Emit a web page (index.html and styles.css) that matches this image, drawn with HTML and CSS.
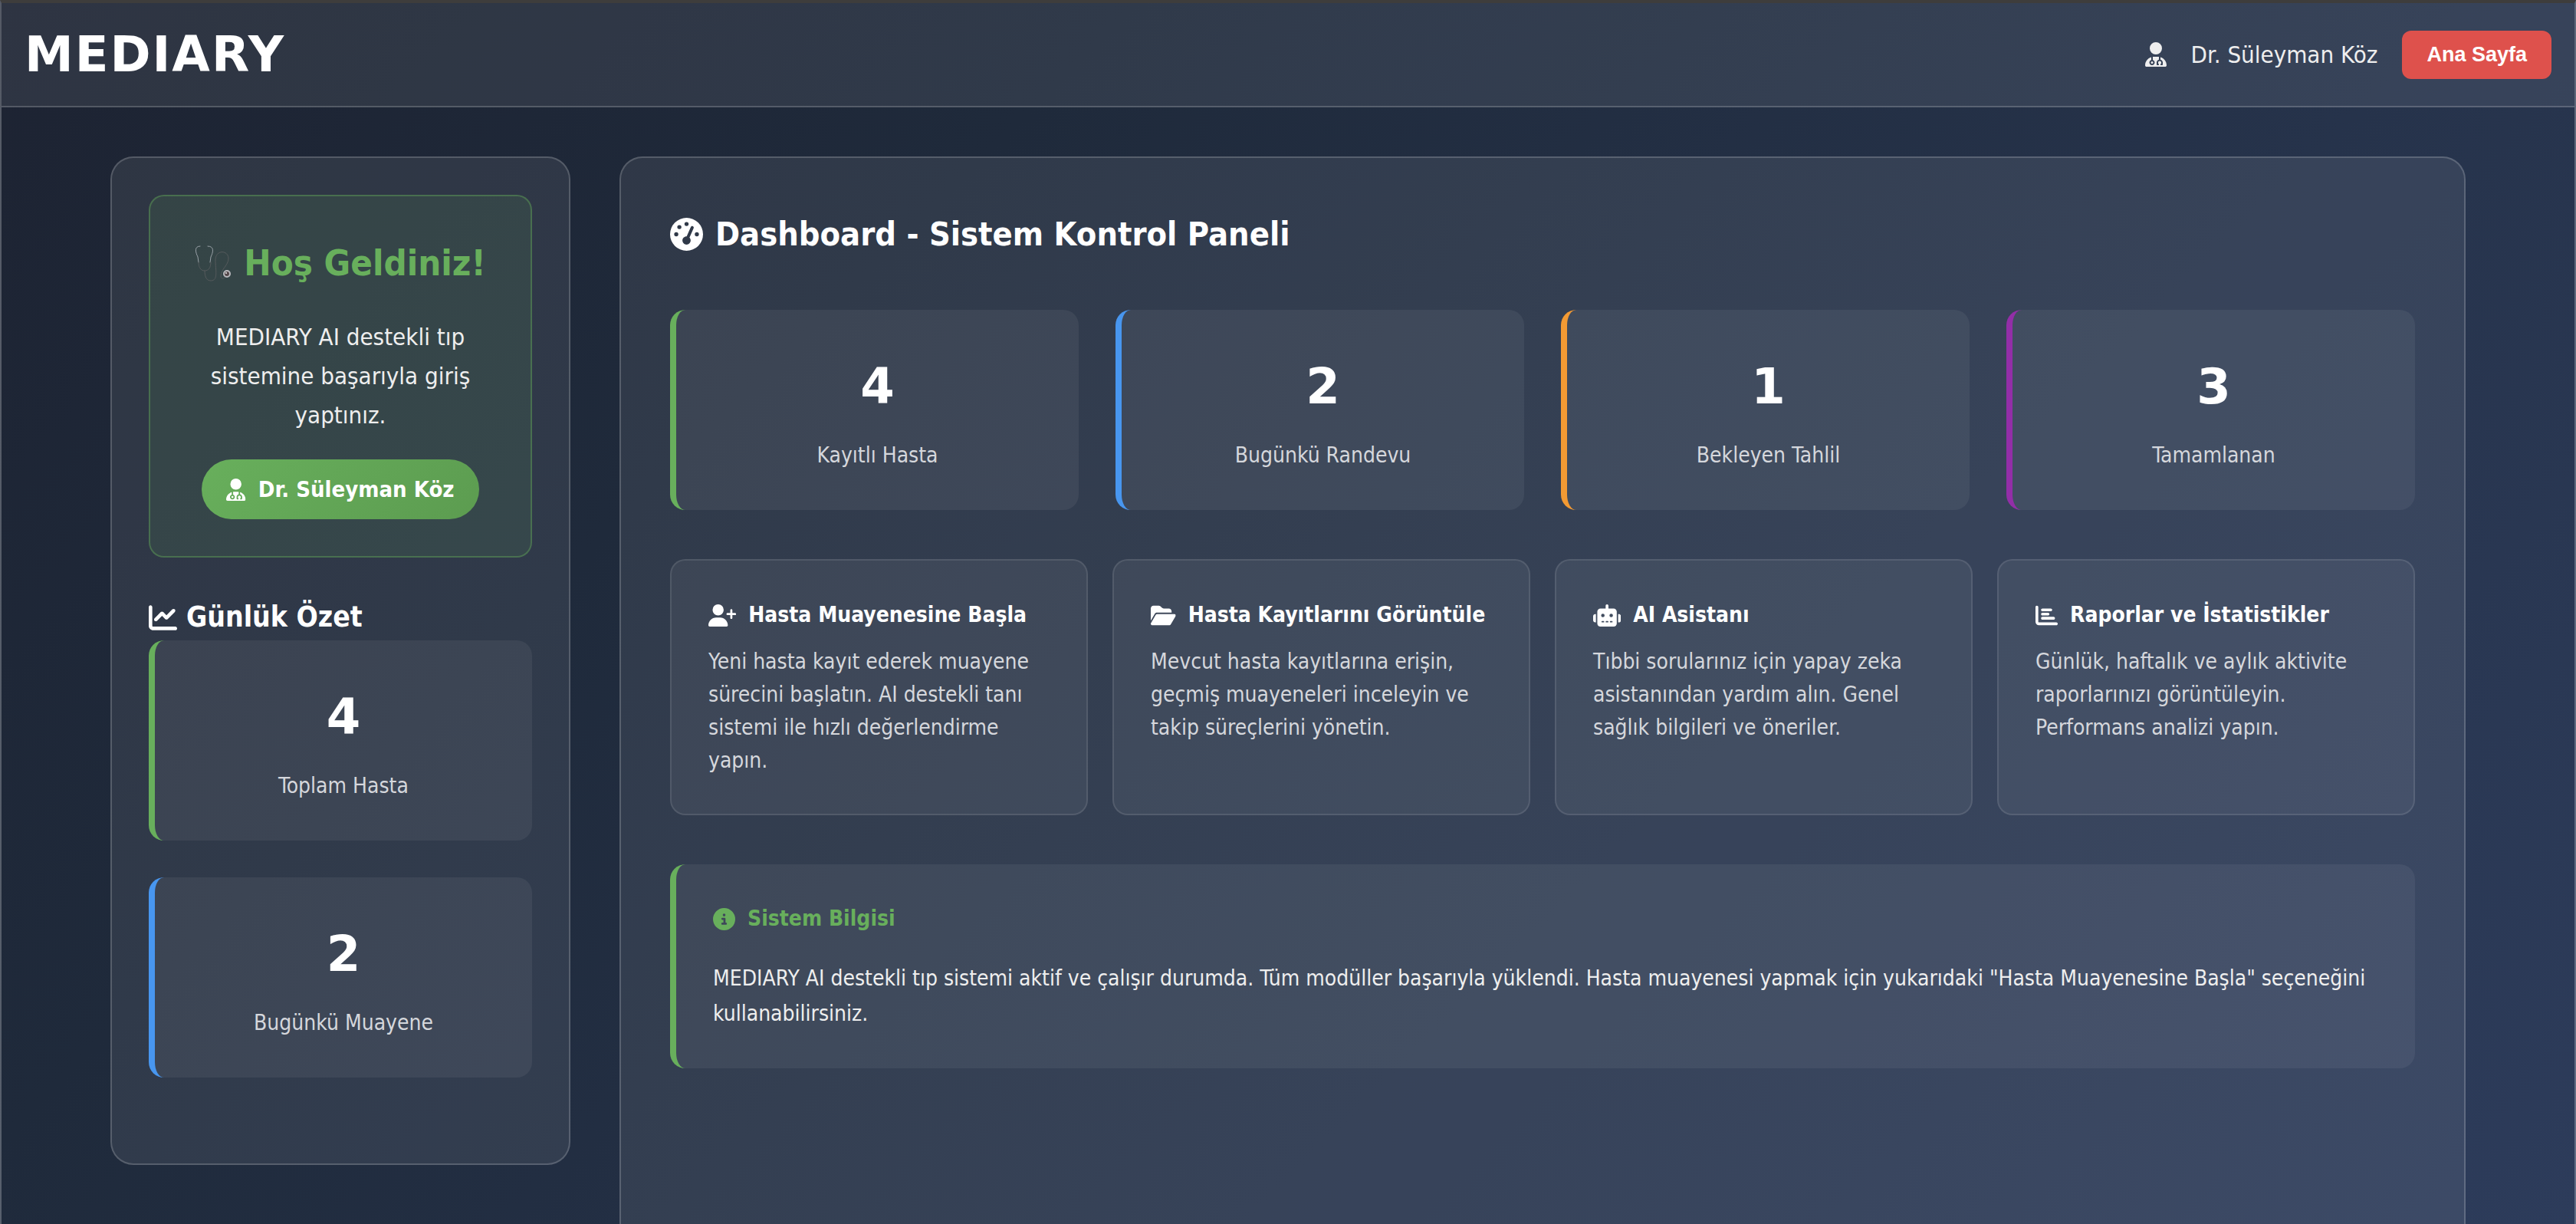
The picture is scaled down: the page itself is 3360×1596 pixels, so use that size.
FILE: index.html
```html
<!DOCTYPE html>
<html lang="tr">
<head>
<meta charset="utf-8">
<title>MEDIARY</title>
<link rel="stylesheet" href="styles.css">
</head>
<body>
<svg class="sprite" aria-hidden="true">
  <symbol id="user-doctor" viewBox="0 0 448 512"><path d="M224 256a128 128 0 1 0 0-256 128 128 0 1 0 0 256zm-96 55.200C54 332.900 0 401.300 0 482.300 0 498.700 13.300 512 29.700 512h388.600c16.400 0 29.700-13.300 29.700-29.700 0-81-54-149.400-128-171.100V362c27.600 7.100 48 32.200 48 62v40c0 8.800-7.200 16-16 16h-16c-8.800 0-16-7.200-16-16s7.200-16 16-16v-24c0-17.700-14.300-32-32-32s-32 14.300-32 32v24c8.800 0 16 7.200 16 16s-7.200 16-16 16h-16c-8.800 0-16-7.200-16-16v-40c0-29.800 20.400-54.900 48-62v-57.100c-6-.6-12.100-.9-18.300-.9h-91.400c-6.200 0-12.300.3-18.300.9v65.400c23.100 6.900 40 28.300 40 53.700 0 30.900-25.100 56-56 56s-56-25.100-56-56c0-25.400 16.900-46.800 40-53.700v-59.100zM144 448a24 24 0 1 0 0-48 24 24 0 1 0 0 48z"/></symbol>
  <symbol id="chart-line" viewBox="0 0 512 512"><path d="M64 64c0-17.700-14.300-32-32-32S0 46.300 0 64v336c0 44.200 35.800 80 80 80h400c17.700 0 32-14.300 32-32s-14.300-32-32-32H80c-8.800 0-16-7.200-16-16V64zm406.600 86.600c12.500-12.500 12.500-32.800 0-45.300s-32.800-12.500-45.300 0L320 210.700l-57.400-57.400c-12.500-12.500-32.800-12.500-45.300 0l-112 112c-12.500 12.500-12.500 32.800 0 45.300s32.800 12.500 45.300 0L240 221.300l57.400 57.400c12.500 12.500 32.800 12.500 45.300 0l128-128z"/></symbol>
  <symbol id="gauge" viewBox="0 0 512 512"><path fill-rule="evenodd" d="M0 256a256 256 0 1 1 512 0 256 256 0 1 1-512 0zm288-160a32 32 0 1 0-64 0 32 32 0 1 0 64 0zM256 416c35.300 0 64-28.700 64-64 0-17.400-6.900-33.100-18.100-44.600L366 161.700c5.300-12.100-.2-26.300-12.300-31.600s-26.300.2-31.600 12.300L257.900 288H256c-35.300 0-64 28.700-64 64s28.700 64 64 64zM176 144a32 32 0 1 0-64 0 32 32 0 1 0 64 0zM96 288a32 32 0 1 0 0-64 32 32 0 1 0 0 64zm352-32a32 32 0 1 0-64 0 32 32 0 1 0 64 0z"/></symbol>
  <symbol id="user-plus" viewBox="0 0 640 512"><path d="M96 128a128 128 0 1 1 256 0 128 128 0 1 1-256 0zM0 482.300C0 383.800 79.800 304 178.300 304h91.400c98.500 0 178.300 79.800 178.300 178.300 0 16.400-13.300 29.700-29.700 29.700H29.700C13.300 512 0 498.700 0 482.300zM504 312v-64h-64c-13.300 0-24-10.700-24-24s10.700-24 24-24h64v-64c0-13.300 10.700-24 24-24s24 10.700 24 24v64h64c13.300 0 24 10.700 24 24s-10.700 24-24 24h-64v64c0 13.300-10.700 24-24 24s-24-10.700-24-24z"/></symbol>
  <symbol id="folder-open" viewBox="0 0 576 512"><path d="M88.700 223.800 0 375.800V96c0-35.300 28.700-64 64-64h117.500c17 0 33.300 6.700 45.300 18.700l26.500 26.500c12 12 28.300 18.700 45.300 18.700H416c35.300 0 64 28.700 64 64v32H144c-22.800 0-43.800 12.100-55.300 31.800zm27.600 16.100c5.800-9.900 16.300-15.900 27.700-15.900h400c11.500 0 22 6.100 27.700 16.100s5.700 22.200-.1 32.100l-112 192c-5.700 9.900-16.200 15.900-27.600 15.900H32c-11.500 0-22-6.100-27.700-16.100s-5.700-22.200.1-32.100l112-192z"/></symbol>
  <symbol id="robot" viewBox="0 0 640 512"><path fill-rule="evenodd" d="M320 0c17.700 0 32 14.300 32 32v64h120c39.800 0 72 32.200 72 72v272c0 39.800-32.200 72-72 72H168c-39.800 0-72-32.200-72-72V168c0-39.800 32.200-72 72-72h120V32c0-17.700 14.300-32 32-32zM208 384c-8.800 0-16 7.200-16 16s7.200 16 16 16h32c8.800 0 16-7.200 16-16s-7.200-16-16-16h-32zm96 0c-8.800 0-16 7.200-16 16s7.200 16 16 16h32c8.800 0 16-7.200 16-16s-7.200-16-16-16h-32zm96 0c-8.800 0-16 7.200-16 16s7.200 16 16 16h32c8.800 0 16-7.200 16-16s-7.200-16-16-16h-32zM264 256a40 40 0 1 0-80 0 40 40 0 1 0 80 0zm152 40a40 40 0 1 0 0-80 40 40 0 1 0 0 80zM48 224h16v192H48c-26.500 0-48-21.500-48-48v-96c0-26.500 21.500-48 48-48zm544 0c26.500 0 48 21.500 48 48v96c0 26.500-21.500 48-48 48h-16V224h16z"/></symbol>
  <symbol id="chart-bar" viewBox="0 0 512 512"><path d="M32 32c17.700 0 32 14.300 32 32v336c0 8.800 7.200 16 16 16h400c17.700 0 32 14.300 32 32s-14.300 32-32 32H80c-44.200 0-80-35.800-80-80V64c0-17.700 14.300-32 32-32zm96 96c0-17.700 14.300-32 32-32h192c17.700 0 32 14.300 32 32s-14.300 32-32 32H160c-17.700 0-32-14.300-32-32zm32 64h128c17.700 0 32 14.300 32 32s-14.300 32-32 32H160c-17.700 0-32-14.300-32-32s14.300-32 32-32zm0 96h256c17.700 0 32 14.300 32 32s-14.300 32-32 32H160c-17.700 0-32-14.300-32-32s14.300-32 32-32z"/></symbol>
  <symbol id="circle-info" viewBox="0 0 512 512"><path fill-rule="evenodd" d="M256 512a256 256 0 1 0 0-512 256 256 0 1 0 0 512zm-40-176h24v-64h-24c-13.300 0-24-10.700-24-24s10.700-24 24-24h48c13.300 0 24 10.700 24 24v88h8c13.300 0 24 10.700 24 24s-10.700 24-24 24h-80c-13.300 0-24-10.700-24-24s10.700-24 24-24zm40-208a32 32 0 1 1 0 64 32 32 0 1 1 0-64z"/></symbol>
</svg>

<header class="topbar">
  <div class="logo">MEDIARY</div>
  <div class="account">
    <svg class="icon icon-448"><use href="#user-doctor"/></svg>
    <span class="account-name">Dr. Süleyman Köz</span>
    <button type="button" class="home-button">Ana Sayfa</button>
  </div>
</header>

<div class="layout">
  <aside class="panel sidebar">
    <section class="welcome">
      <h2 class="welcome-title">
        <svg class="stethoscope" viewBox="0 0 48 48" fill="none" stroke-linecap="round"><path d="M7 2C-1 2 1 10 4 16l1 7M17 2c9 0 7 8 4 14l-1 7" stroke="#9aa2a8" stroke-width="1"/><path d="M5 23c0 7 3 11 8 11s8-4 8-11M13 34c0 9 3 13 8 13 10 0 6-14 6-27 0-14 17-13 17-2 0 9-10 14-10 23 0 4 4 4 6 1" stroke="#555a5c" stroke-width="1"/><circle cx="42" cy="38" r="4" fill="#55484a" stroke="#b9b9bd" stroke-width="2"/><circle cx="41" cy="37" r="1" fill="#eeeeee"/></svg>
        <span>Hoş Geldiniz!</span>
      </h2>
      <p class="welcome-text">MEDIARY AI destekli tıp sistemine başarıyla giriş yaptınız.</p>
      <span class="badge"><svg class="icon icon-448"><use href="#user-doctor"/></svg>Dr. Süleyman Köz</span>
    </section>
    <h3 class="summary-title"><svg class="icon"><use href="#chart-line"/></svg>Günlük Özet</h3>
    <div class="summary">
      <div class="stat green"><div class="stat-value">4</div><div class="stat-label">Toplam Hasta</div></div>
      <div class="stat blue"><div class="stat-value">2</div><div class="stat-label">Bugünkü Muayene</div></div>
    </div>
  </aside>

  <main class="panel main">
    <h1 class="page-title"><svg class="icon"><use href="#gauge"/></svg>Dashboard - Sistem Kontrol Paneli</h1>
    <div class="stats">
      <div class="stat green"><div class="stat-value">4</div><div class="stat-label">Kayıtlı Hasta</div></div>
      <div class="stat blue"><div class="stat-value">2</div><div class="stat-label">Bugünkü Randevu</div></div>
      <div class="stat orange"><div class="stat-value">1</div><div class="stat-label">Bekleyen Tahlil</div></div>
      <div class="stat purple"><div class="stat-value">3</div><div class="stat-label">Tamamlanan</div></div>
    </div>
    <div class="features">
      <article class="feature">
        <h4 class="card-title"><svg class="icon icon-640"><use href="#user-plus"/></svg>Hasta Muayenesine Başla</h4>
        <p>Yeni hasta kayıt ederek muayene sürecini başlatın. AI destekli tanı sistemi ile hızlı değerlendirme yapın.</p>
      </article>
      <article class="feature">
        <h4 class="card-title"><svg class="icon icon-576"><use href="#folder-open"/></svg>Hasta Kayıtlarını Görüntüle</h4>
        <p>Mevcut hasta kayıtlarına erişin, geçmiş muayeneleri inceleyin ve takip süreçlerini yönetin.</p>
      </article>
      <article class="feature">
        <h4 class="card-title"><svg class="icon icon-640"><use href="#robot"/></svg>AI Asistanı</h4>
        <p>Tıbbi sorularınız için yapay zeka asistanından yardım alın. Genel sağlık bilgileri ve öneriler.</p>
      </article>
      <article class="feature">
        <h4 class="card-title"><svg class="icon"><use href="#chart-bar"/></svg>Raporlar ve İstatistikler</h4>
        <p>Günlük, haftalık ve aylık aktivite raporlarınızı görüntüleyin. Performans analizi yapın.</p>
      </article>
    </div>
    <section class="info">
      <h4 class="card-title"><svg class="icon"><use href="#circle-info"/></svg>Sistem Bilgisi</h4>
      <p>MEDIARY AI destekli tıp sistemi aktif ve çalışır durumda. Tüm modüller başarıyla yüklendi. Hasta muayenesi yapmak için yukarıdaki "Hasta Muayenesine Başla" seçeneğini kullanabilirsiniz.</p>
    </section>
  </main>
</div>
</body>
</html>
```
FILE: styles.css
```css
* {
  box-sizing: border-box;
  margin: 0;
  padding: 0;
}

body {
  min-height: 100vh;
  display: flex;
  flex-direction: column;
  font-family: "DejaVu Sans Condensed", "Noto Sans", sans-serif;
  font-size: 28px;
  line-height: 46px;
  color: #ffffff;
  background: linear-gradient(135deg, #1d2332 0%, #1f2a3b 30%, #2d3c5b 100%);
  border: 2px solid rgba(255, 255, 255, 0.25);
  border-top: 4px solid #3e3d3c;
  border-bottom: 0;
}

.sprite {
  display: none;
}

.icon {
  width: 1em;
  height: 1em;
  flex: none;
  fill: currentColor;
}

.icon-448 { width: 0.875em; }
.icon-576 { width: 1.125em; }
.icon-640 { width: 1.25em; }

.topbar {
  padding: 16px 30px;
  display: flex;
  align-items: center;
  justify-content: space-between;
  background: rgba(255, 255, 255, 0.08);
  border-bottom: 2px solid rgba(255, 255, 255, 0.18);
}

.logo {
  font-family: "DejaVu Sans", sans-serif;
  font-size: 64px;
  line-height: 102px;
  font-weight: 700;
  letter-spacing: 2px;
}

.account {
  display: flex;
  align-items: center;
  gap: 32px;
  font-size: 32px;
  color: #eeeeee;
}

.account-name {
  font-size: 31px;
}

.home-button {
  padding: 16px 32px;
  border: 0;
  border-radius: 12px;
  background: #de514c;
  color: #ffffff;
  font: 700 27px/31px "Liberation Sans", Arial, sans-serif;
}

.layout {
  flex: 1;
  display: grid;
  grid-template-columns: 600px 1fr;
  gap: 64px;
  padding: 64px 142px 0;
}

.panel {
  border: 2px solid rgba(255, 255, 255, 0.18);
  border-radius: 30px;
  background: rgba(255, 255, 255, 0.08);
}

.sidebar {
  align-self: start;
  padding: 48px 48px 112px;
}

.main {
  padding: 64px;
  border-bottom: 0;
  border-radius: 30px 30px 0 0;
}

.welcome {
  padding: 48px;
  margin-bottom: 48px;
  border: 2px solid rgba(102, 175, 91, 0.4);
  border-radius: 20px;
  background: rgba(102, 175, 91, 0.12);
  text-align: center;
}

.welcome-title {
  display: flex;
  justify-content: center;
  align-items: center;
  gap: 16px;
  margin-bottom: 32px;
  font-size: 47px;
  line-height: 78px;
  color: #68af5c;
}

.stethoscope {
  width: 48px;
  height: 48px;
  flex: none;
}

.welcome-text {
  margin-bottom: 32px;
  font-size: 31px;
  line-height: 51px;
  color: #eeeeee;
}

.badge {
  display: inline-flex;
  align-items: center;
  gap: 16px;
  padding: 16px 32px;
  border-radius: 40px;
  background: linear-gradient(135deg, #68af5c, #5c9c50);
  font-size: 29px;
  font-weight: 700;
}

.summary-title {
  display: flex;
  align-items: center;
  gap: 12px;
  font-size: 37px;
  line-height: 60px;
}

.summary {
  display: grid;
  gap: 48px;
}

.stat {
  padding: 48px;
  border-left: 8px solid;
  border-radius: 20px;
  background: rgba(255, 255, 255, 0.06);
  text-align: center;
}

.green { border-color: #68af5c; }
.blue { border-color: #4896ef; }
.orange { border-color: #f39a33; }
.purple { border-color: #932ea8; }

.stat-value {
  margin-bottom: 14px;
  font-family: "DejaVu Sans", sans-serif;
  font-size: 64px;
  line-height: 105px;
  font-weight: 700;
}

.stat-label {
  color: #d5d7dc;
}

.page-title {
  display: flex;
  align-items: center;
  gap: 16px;
  margin-bottom: 64px;
  font-size: 43px;
  line-height: 70px;
}

.stats {
  display: grid;
  grid-template-columns: repeat(4, minmax(0, 1fr));
  gap: 48px;
  margin-bottom: 64px;
}

.features {
  display: grid;
  grid-template-columns: repeat(4, minmax(0, 1fr));
  gap: 32px;
  margin-bottom: 64px;
}

.feature {
  padding: 48px;
  border: 2px solid rgba(255, 255, 255, 0.1);
  border-radius: 20px;
  background: rgba(255, 255, 255, 0.06);
}

.card-title {
  display: flex;
  align-items: center;
  gap: 16px;
  margin-bottom: 16px;
  white-space: nowrap;
}

.card-title .icon {
  font-size: 29px;
}

.feature p {
  line-height: 43px;
  color: #d5d7dc;
}

.info {
  padding: 48px;
  border-left: 8px solid #68af5c;
  border-radius: 20px;
  background: rgba(255, 255, 255, 0.06);
}

.info .card-title {
  margin-bottom: 32px;
  color: #68af5c;
}

.info p {
  color: #eeeeee;
}
```
